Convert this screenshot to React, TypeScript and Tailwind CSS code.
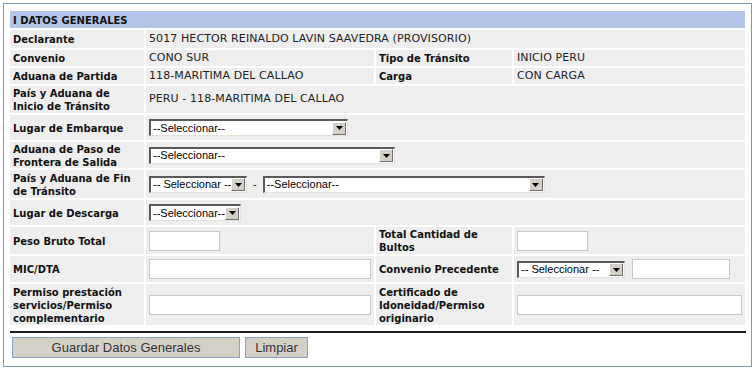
import React from 'react';

const Select = ({ width, label = '--Seleccionar--' }: { width: number; label?: string }) => (
  <div
    className="flex items-center h-[17px] bg-white border-t-2 border-l-2 border-b border-r border-t-[#5a5a5a] border-l-[#5a5a5a] border-b-[#e4e2dc] border-r-[#e4e2dc]"
    style={{ width }}
  >
    <span className="flex-1 pl-[2px] text-[11px] tracking-normal leading-none text-black font-['Liberation_Sans',Arial,sans-serif] whitespace-nowrap overflow-hidden">
      {label}
    </span>
    <span className="flex items-center justify-center w-[14px] h-[13px] mr-[1px] bg-[#d4d0c8] border border-t-white border-l-white border-b-[#6f6f6f] border-r-[#6f6f6f]">
      <svg width="7" height="4" viewBox="0 0 7 4">
        <path d="M0 0h7L3.5 4z" fill="#000" />
      </svg>
    </span>
  </div>
);

const Input = ({ width }: { width: number }) => (
  <div className="h-[20px] bg-white border border-[#c8c8c8]" style={{ width }} />
);

const Label = ({ children, className = '' }: { children: React.ReactNode; className?: string }) => (
  <div className={`bg-[#eeeeee] flex items-center px-[3px] pt-[1px] text-[10px] leading-[13px] font-bold text-[#111] ${className}`}>
    <div>{children}</div>
  </div>
);

const Value = ({ children, className = '' }: { children?: React.ReactNode; className?: string }) => (
  <div className={`bg-[#eeeeee] flex items-center px-[3px] text-[11px] tracking-[0.1px] text-[#222] ${className}`}>
    {children}
  </div>
);

export default function App() {
  return (
    <div className="w-[756px] h-[370px] bg-white p-[3px] font-['DejaVu_Sans',Verdana,sans-serif]">
      <div className="w-[749px] h-[364px] border border-[#7e98b4] pl-[6px] pt-[7px]">
        <div className="grid grid-cols-[134px_228px_136px_231px] grid-rows-[17px_18px_16px_16px_27px_25px_26px_28px_25px_27px_26px_41px] gap-[2px]">
          {/* Header */}
          <div className="col-span-4 bg-[#b3c6e7] flex items-center px-[3px] pt-[1px] text-[10px] font-bold text-[#111]">
            I DATOS GENERALES
          </div>

          <Label>Declarante</Label>
          <Value className="col-span-3">5017 HECTOR REINALDO LAVIN SAAVEDRA (PROVISORIO)</Value>

          <Label>Convenio</Label>
          <Value>CONO SUR</Value>
          <Label>Tipo de Tránsito</Label>
          <Value>INICIO PERU</Value>

          <Label>Aduana de Partida</Label>
          <Value>118-MARITIMA DEL CALLAO</Value>
          <Label>Carga</Label>
          <Value>CON CARGA</Value>

          <Label>
            País y Aduana de
            <br />
            Inicio de Tránsito
          </Label>
          <Value className="col-span-3">PERU - 118-MARITIMA DEL CALLAO</Value>

          <Label>Lugar de Embarque</Label>
          <Value className="col-span-3">
            <Select width={199} />
          </Value>

          <Label>
            Aduana de Paso de
            <br />
            Frontera de Salida
          </Label>
          <Value className="col-span-3">
            <Select width={246} />
          </Value>

          <Label>
            País y Aduana de Fin
            <br />
            de Tránsito
          </Label>
          <Value className="col-span-3 gap-[6px]">
            <Select width={98} label="-- Seleccionar --" />
            <span className="text-[11px] font-['Liberation_Sans',Arial,sans-serif]">-</span>
            <Select width={282} />
          </Value>

          <Label>Lugar de Descarga</Label>
          <Value className="col-span-3">
            <Select width={92} />
          </Value>

          <Label>Peso Bruto Total</Label>
          <Value>
            <Input width={71} />
          </Value>
          <Label>
            Total Cantidad de
            <br />
            Bultos
          </Label>
          <Value>
            <Input width={71} />
          </Value>

          <Label>MIC/DTA</Label>
          <Value>
            <Input width={225} />
          </Value>
          <Label>Convenio Precedente</Label>
          <Value className="gap-[7px]">
            <Select width={108} label="-- Seleccionar --" />
            <Input width={98} />
          </Value>

          <Label>
            Permiso prestación
            <br />
            servicios/Permiso
            <br />
            complementario
          </Label>
          <Value>
            <Input width={225} />
          </Value>
          <Label>
            Certificado de
            <br />
            Idoneidad/Permiso
            <br />
            originario
          </Label>
          <Value>
            <Input width={225} />
          </Value>
        </div>

        <div className="mt-[6px] w-[736px] h-[2px] bg-[#1e1e1e]" />

        <div className="flex gap-[5px] mt-[4px] pl-[2px]">
          <button className="w-[228px] h-[21px] bg-[#d4d0c8] border border-[#8aa2bd] text-[13px] leading-none text-[#333] font-['Liberation_Sans',Arial,sans-serif]">
            Guardar Datos Generales
          </button>
          <button className="w-[63px] h-[21px] bg-[#d4d0c8] border border-[#8aa2bd] text-[13px] leading-none text-[#333] font-['Liberation_Sans',Arial,sans-serif]">
            Limpiar
          </button>
        </div>
      </div>
    </div>
  );
}
